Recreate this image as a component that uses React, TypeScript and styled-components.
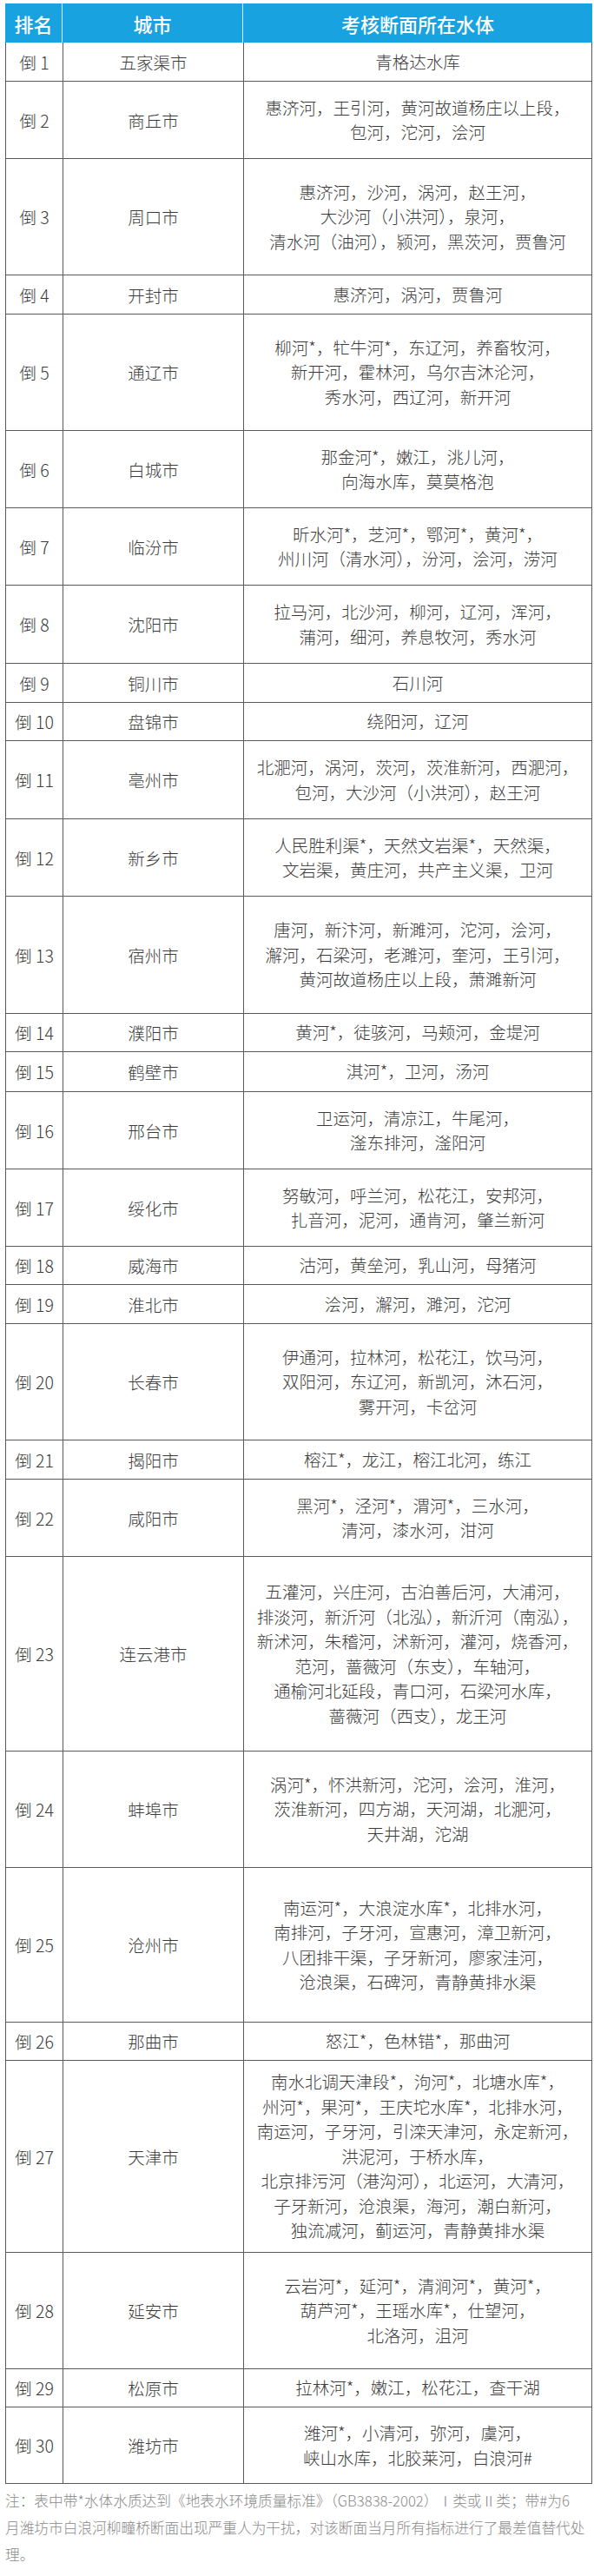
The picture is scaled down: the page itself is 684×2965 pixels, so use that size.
import React from 'react';
import styled, { createGlobalStyle } from 'styled-components';

type Entry = {
  rank: string;
  city: string;
  waters: string[];
  h: number;
};

const rows: Entry[] = [
  { rank: '倒 1', city: '五家渠市', h: 45, waters: ['青格达水库'] },
  { rank: '倒 2', city: '商丘市', h: 89, waters: ['惠济河，王引河，黄河故道杨庄以上段，', '包河，沱河，浍河'] },
  {
    rank: '倒 3',
    city: '周口市',
    h: 134,
    waters: ['惠济河，沙河，涡河，赵王河，', '大沙河（小洪河），泉河，', '清水河（油河），颍河，黑茨河，贾鲁河'],
  },
  { rank: '倒 4', city: '开封市', h: 45, waters: ['惠济河，涡河，贾鲁河'] },
  {
    rank: '倒 5',
    city: '通辽市',
    h: 134,
    waters: ['柳河*，牤牛河*，东辽河，养畜牧河，', '新开河，霍林河，乌尔吉沐沦河，', '秀水河，西辽河，新开河'],
  },
  { rank: '倒 6', city: '白城市', h: 89, waters: ['那金河*，嫩江，洮儿河，', '向海水库，莫莫格泡'] },
  { rank: '倒 7', city: '临汾市', h: 89, waters: ['昕水河*，芝河*，鄂河*，黄河*，', '州川河（清水河），汾河，浍河，涝河'] },
  { rank: '倒 8', city: '沈阳市', h: 90, waters: ['拉马河，北沙河，柳河，辽河，浑河，', '蒲河，细河，养息牧河，秀水河'] },
  { rank: '倒 9', city: '铜川市', h: 45, waters: ['石川河'] },
  { rank: '倒 10', city: '盘锦市', h: 44, waters: ['绕阳河，辽河'] },
  { rank: '倒 11', city: '亳州市', h: 90, waters: ['北淝河，涡河，茨河，茨淮新河，西淝河，', '包河，大沙河（小洪河），赵王河'] },
  { rank: '倒 12', city: '新乡市', h: 89, waters: ['人民胜利渠*，天然文岩渠*，天然渠，', '文岩渠，黄庄河，共产主义渠，卫河'] },
  {
    rank: '倒 13',
    city: '宿州市',
    h: 135,
    waters: ['唐河，新汴河，新濉河，沱河，浍河，', '澥河，石梁河，老濉河，奎河，王引河，', '黄河故道杨庄以上段，萧濉新河'],
  },
  { rank: '倒 14', city: '濮阳市', h: 44, waters: ['黄河*，徒骇河，马颊河，金堤河'] },
  { rank: '倒 15', city: '鹤壁市', h: 46, waters: ['淇河*，卫河，汤河'] },
  { rank: '倒 16', city: '邢台市', h: 89, waters: ['卫运河，清凉江，牛尾河，', '滏东排河，滏阳河'] },
  { rank: '倒 17', city: '绥化市', h: 89, waters: ['努敏河，呼兰河，松花江，安邦河，', '扎音河，泥河，通肯河，肇兰新河'] },
  { rank: '倒 18', city: '威海市', h: 44, waters: ['沽河，黄垒河，乳山河，母猪河'] },
  { rank: '倒 19', city: '淮北市', h: 45, waters: ['浍河，澥河，濉河，沱河'] },
  {
    rank: '倒 20',
    city: '长春市',
    h: 134,
    waters: ['伊通河，拉林河，松花江，饮马河，', '双阳河，东辽河，新凯河，沐石河，', '雾开河，卡岔河'],
  },
  { rank: '倒 21', city: '揭阳市', h: 45, waters: ['榕江*，龙江，榕江北河，练江'] },
  { rank: '倒 22', city: '咸阳市', h: 89, waters: ['黑河*，泾河*，渭河*，三水河，', '清河，漆水河，泔河'] },
  {
    rank: '倒 23',
    city: '连云港市',
    h: 224,
    waters: [
      '五灌河，兴庄河，古泊善后河，大浦河，',
      '排淡河，新沂河（北泓），新沂河（南泓），',
      '新沭河，朱稽河，沭新河，灌河，烧香河，',
      '范河，蔷薇河（东支），车轴河，',
      '通榆河北延段，青口河，石梁河水库，',
      '蔷薇河（西支），龙王河',
    ],
  },
  {
    rank: '倒 24',
    city: '蚌埠市',
    h: 134,
    waters: ['涡河*，怀洪新河，沱河，浍河，淮河，', '茨淮新河，四方湖，天河湖，北淝河，', '天井湖，沱湖'],
  },
  {
    rank: '倒 25',
    city: '沧州市',
    h: 178,
    waters: [
      '南运河*，大浪淀水库*，北排水河，',
      '南排河，子牙河，宣惠河，漳卫新河，',
      '八团排干渠，子牙新河，廖家洼河，',
      '沧浪渠，石碑河，青静黄排水渠',
    ],
  },
  { rank: '倒 26', city: '那曲市', h: 44, waters: ['怒江*，色林错*，那曲河'] },
  {
    rank: '倒 27',
    city: '天津市',
    h: 221,
    waters: [
      '南水北调天津段*，泃河*，北塘水库*，',
      '州河*，果河*，王庆坨水库*，北排水河，',
      '南运河，子牙河，引滦天津河，永定新河，',
      '洪泥河，于桥水库，',
      '北京排污河（港沟河），北运河，大清河，',
      '子牙新河，沧浪渠，海河，潮白新河，',
      '独流减河，蓟运河，青静黄排水渠',
    ],
  },
  {
    rank: '倒 28',
    city: '延安市',
    h: 134,
    waters: ['云岩河*，延河*，清涧河*，黄河*，', '葫芦河*，王瑶水库*，仕望河，', '北洛河，沮河'],
  },
  { rank: '倒 29', city: '松原市', h: 44, waters: ['拉林河*，嫩江，松花江，查干湖'] },
  { rank: '倒 30', city: '潍坊市', h: 88, waters: ['潍河*，小清河，弥河，虞河，', '峡山水库，北胶莱河，白浪河#'] },
];

const notes = [
  '注：表中带*水体水质达到《地表水环境质量标准》（GB3838-2002）Ⅰ类或Ⅱ类；带#为6',
  '月潍坊市白浪河柳疃桥断面出现严重人为干扰，对该断面当月所有指标进行了最差值替代处',
  '理。',
];

const GlobalStyle = createGlobalStyle`
  html, body {
    margin: 0;
    padding: 0;
    background: #ffffff;
  }
  body {
    font-family: "Noto Sans CJK SC", "Noto Sans", sans-serif;
    color: #3b3b3b;
  }
`;

const Page = styled.div`
  width: 684px;
  box-sizing: border-box;
  padding: 4px 2px 0 6px;
`;

const Grid = styled.div`
  display: grid;
  grid-template-columns: 66px 208px 1fr;
  box-sizing: border-box;
`;

const HeadRow = styled(Grid)`
  height: 45px;
  background: #18a2df;
`;

const HeadCell = styled.div`
  display: flex;
  align-items: center;
  justify-content: center;
  color: #ffffff;
  font-size: 22px;
  font-weight: 500;
  border-right: 1.5px solid rgba(255, 255, 255, 0.85);

  &:last-child {
    border-right: none;
  }
`;

const Body = styled.div`
  border-left: 1px solid #5a5a5a;
  border-right: 1px solid #5a5a5a;
`;

const Row = styled(Grid)<{ $h: number }>`
  height: ${(p) => p.$h}px;
  border-bottom: 1px solid #5a5a5a;
`;

const Cell = styled.div`
  display: flex;
  flex-direction: column;
  align-items: center;
  justify-content: center;
  font-size: 19.5px;
  font-weight: 300;
  border-right: 1px solid #5a5a5a;

  &:last-child {
    border-right: none;
  }
`;

const Line = styled.div`
  white-space: nowrap;
  line-height: 28.5px;
`;

const Notes = styled.div`
  margin-top: 4px;
  color: #8a8a8a;
  font-size: 16.7px;
  font-weight: 300;
  line-height: 31px;
`;

const NoteLine = styled.div`
  white-space: nowrap;
`;

export default function App() {
  return (
    <Page>
      <GlobalStyle />
      <HeadRow>
        <HeadCell>排名</HeadCell>
        <HeadCell>城市</HeadCell>
        <HeadCell>考核断面所在水体</HeadCell>
      </HeadRow>
      <Body>
        {rows.map((r) => (
          <Row key={r.rank} $h={r.h}>
            <Cell>{r.rank}</Cell>
            <Cell>{r.city}</Cell>
            <Cell>
              {r.waters.map((w, i) => (
                <Line key={i}>{w}</Line>
              ))}
            </Cell>
          </Row>
        ))}
      </Body>
      <Notes>
        {notes.map((n, i) => (
          <NoteLine key={i}>{n}</NoteLine>
        ))}
      </Notes>
    </Page>
  );
}
